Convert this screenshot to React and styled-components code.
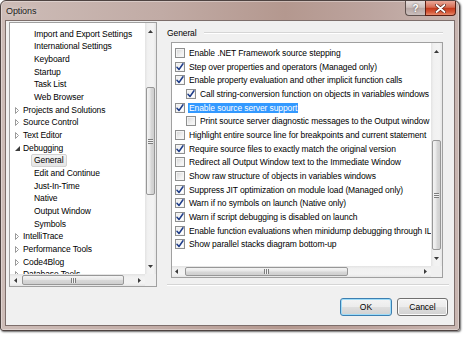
import React from "react";
import styled, { createGlobalStyle } from "styled-components";

const GlobalStyle = createGlobalStyle`
  html, body {
    margin: 0;
    padding: 0;
    background: #ffffff;
  }
  body {
    font-family: "Segoe UI", "Liberation Sans", Arial, sans-serif;
    font-size: 8.5px;
    letter-spacing: -0.1px;
    color: #000;
  }
`;

const Page = styled.div`
  width: 466px;
  height: 337px;
  overflow: hidden;
`;

const Window = styled.div`
  width: 460px;
  height: 331px;
  box-sizing: border-box;
  border: 1px solid #4e4341;
  border-radius: 6px 6px 3px 3px;
  background: linear-gradient(
    90deg,
    #cdbcb7 0%,
    #c1aba5 35%,
    #b4988f 62%,
    #bca39d 80%,
    #c9b6b1 100%
  );
  box-shadow: 1px 1px 2px rgba(0, 0, 0, 0.6),
    inset 0 0 0 1px rgba(255, 255, 255, 0.35);
  display: flex;
  flex-direction: column;
`;

const TitleBar = styled.div`
  height: 19px;
  flex: none;
  display: flex;
  justify-content: space-between;
  align-items: flex-start;
  padding: 0 3px 0 5px;
`;

const Title = styled.span`
  font-size: 9px;
  line-height: 20px;
  color: #1b1b1b;
  text-shadow: 0 0 5px rgba(255, 255, 255, 0.7);
`;

const CaptionButtons = styled.div`
  display: flex;
`;

const HelpButton = styled.div`
  width: 20px;
  height: 15px;
  box-sizing: border-box;
  border: 1px solid #5e504d;
  border-top: none;
  border-right: none;
  border-radius: 0 0 0 4px;
  background: linear-gradient(#e4dbd9, #cdc0bd 45%, #b8a8a5 52%, #cbbfbd);
  display: flex;
  align-items: center;
  justify-content: center;
  color: #ffffff;
  font-size: 10px;
  font-weight: bold;
  text-shadow: 0 0 2px #444;
`;

const CloseButton = styled.div`
  width: 31px;
  height: 15px;
  box-sizing: border-box;
  border: 1px solid #5b1f14;
  border-top: none;
  border-radius: 0 0 4px 0;
  background: linear-gradient(#eaa99a, #d66c52 45%, #c4391b 52%, #d55a3b 80%, #e88c6d);
  display: flex;
  align-items: center;
  justify-content: center;
`;

const Client = styled.div`
  flex: 1;
  margin: 0 4px 4px;
  background: #f0f0f0;
  border: 1px solid #7d6e6b;
  display: flex;
  flex-direction: column;
`;

const Main = styled.div`
  display: flex;
  align-items: flex-start;
  padding: 1px 0 0 3px;
`;

const Tree = styled.div`
  width: 148px;
  height: 265px;
  box-sizing: border-box;
  border: 1px solid #a0a0a0;
  background: #ffffff;
  display: grid;
  grid-template-columns: 1fr 11px;
  grid-template-rows: 1fr 12px;
  grid-template-areas: "content vbar" "hbar corner";
`;

const TreeContent = styled.div`
  grid-area: content;
  overflow: hidden;
  padding-top: 5px;
`;

const TreeRow = styled.div`
  height: 12.67px;
  display: flex;
  align-items: center;
  white-space: nowrap;
  padding-left: ${(p) => (p.$level === 0 ? 5 : 21)}px;
`;

const Expander = styled.span`
  width: 5px;
  height: 7px;
  margin-right: 3px;
  display: flex;
  align-items: center;
`;

const TreeLabel = styled.span`
  line-height: 11px;
  padding: 0 2px;
  border: 1px solid ${(p) => (p.$selected ? "#d2d2d2" : "transparent")};
  border-radius: 2px;
  background: ${(p) =>
    p.$selected ? "linear-gradient(#f4f4f4, #e4e4e4)" : "transparent"};
  margin-left: ${(p) => (p.$level === 0 ? -3 : 0)}px;
`;

const Corner = styled.div`
  grid-area: corner;
  background: #f0f0f0;
`;

const Right = styled.div`
  flex: 1;
  margin-left: 6px;
  padding-right: 5px;
  display: flex;
  flex-direction: column;
`;

const GroupHeader = styled.div`
  height: 20px;
  padding: 1px 6px 0 4px;
  box-sizing: border-box;
  display: flex;
  align-items: center;
`;

const GroupLine = styled.div`
  flex: 1;
  height: 1px;
  margin-left: 7px;
  background: #d5d5d5;
  box-shadow: 0 1px 0 #ffffff;
`;

const ListBox = styled.div`
  margin-left: 8px;
  width: 272px;
  height: 236px;
  box-sizing: border-box;
  border: 1px solid #a0a0a0;
  background: #ffffff;
  display: grid;
  grid-template-columns: 1fr 11px;
  grid-template-rows: 1fr 11px;
  grid-template-areas: "content vbar" "hbar corner";
`;

const ListContent = styled.div`
  grid-area: content;
  overflow: hidden;
  padding-top: 3px;
`;

const OptionRow = styled.div`
  height: 13.7px;
  display: flex;
  align-items: center;
  white-space: nowrap;
  padding-left: ${(p) => 3 + p.$indent * 11}px;
`;

const CheckBox = styled.span`
  flex: none;
  width: 10px;
  height: 10px;
  box-sizing: border-box;
  border: 1px solid #8e8f8f;
  margin-right: 3px;
  background: ${(p) =>
    p.$checked
      ? "linear-gradient(135deg, #e6e6e6, #ffffff 70%)"
      : "linear-gradient(135deg, #d4d4d4, #f0f0f0 60%, #fafafa)"};
  box-shadow: inset 0 0 0 1px #f4f4f4;
  display: flex;
  align-items: center;
  justify-content: center;
`;

const OptionLabel = styled.span`
  line-height: 10px;
  padding: 0 1px;
  color: ${(p) => (p.$selected ? "#ffffff" : "#000000")};
  background: ${(p) => (p.$selected ? "#3399ff" : "transparent")};
`;

const Separator = styled.div`
  height: 1px;
  margin: 6px 0 0 4px;
  background: #d5d5d5;
  box-shadow: 0 1px 0 #ffffff;
`;

const Footer = styled.div`
  display: flex;
  justify-content: flex-end;
  gap: 5px;
  padding: 11px 6px 0 0;
`;

const DialogButton = styled.button`
  width: ${(p) => p.$w}px;
  height: 18px;
  padding: 0;
  font: inherit;
  font-size: 8.5px;
  color: #000;
  border: 1px solid ${(p) => (p.$default ? "#3c7fb1" : "#707070")};
  border-radius: 3px;
  background: linear-gradient(#f4f4f4 0%, #ececec 48%, #dedede 52%, #d1d1d1 100%);
  box-shadow: inset 0 0 0 1px ${(p) => (p.$default ? "#9fdcf8" : "#fbfbfb")};
`;

/* scrollbars */

const VBar = styled.div`
  grid-area: vbar;
  display: flex;
  flex-direction: column;
  background: linear-gradient(90deg, #e3e3e3 0%, #f1f1f1 25%, #f3f3f3 75%, #e6e6e6 100%);
`;

const HBar = styled.div`
  grid-area: hbar;
  display: flex;
  background: linear-gradient(#e3e3e3 0%, #f1f1f1 25%, #f3f3f3 75%, #e6e6e6 100%);
`;

const ArrowCell = styled.div`
  flex: none;
  ${(p) => (p.$horizontal ? "width" : "height")}: ${(p) => p.$size}px;
  display: flex;
  align-items: center;
  justify-content: center;
`;

const Fill = styled.div`
  flex: 1;
`;

const VThumb = styled.div`
  flex: none;
  margin: ${(p) => p.$offset}px 1px 0;
  height: ${(p) => p.$size}px;
  box-sizing: border-box;
  border: 1px solid #979797;
  border-radius: 2px;
  background: linear-gradient(90deg, #f4f4f4, #e7e7e7 45%, #d8d8d8 55%, #cfcfcf);
  display: flex;
  align-items: center;
  justify-content: center;
`;

const HThumb = styled.div`
  flex: none;
  margin: 1px 0 1px ${(p) => p.$offset}px;
  width: ${(p) => p.$size}px;
  box-sizing: border-box;
  border: 1px solid #979797;
  border-radius: 2px;
  background: linear-gradient(#f4f4f4, #e7e7e7 45%, #d8d8d8 55%, #cfcfcf);
  display: flex;
  align-items: center;
  justify-content: center;
`;

const VGrip = styled.span`
  width: 5px;
  height: 5px;
  background: repeating-linear-gradient(#7d7d7d 0 1px, #f2f2f2 1px 2px);
`;

const HGrip = styled.span`
  width: 5px;
  height: 5px;
  background: repeating-linear-gradient(90deg, #7d7d7d 0 1px, #f2f2f2 1px 2px);
`;

function Arrow({ dir }) {
  const pts = {
    up: "0,3 2.5,0 5,3",
    down: "0,0 2.5,3 5,0",
    left: "3,0 0,2.5 3,5",
    right: "0,0 3,2.5 0,5",
  }[dir];
  const vertical = dir === "up" || dir === "down";
  return (
    <svg width={vertical ? 5 : 3} height={vertical ? 3 : 5}>
      <polygon points={pts} fill="#3a3a3a" />
    </svg>
  );
}

function VScrollBar({ up, offset, size, down }) {
  return (
    <VBar>
      <ArrowCell $size={up}>
        <Arrow dir="up" />
      </ArrowCell>
      <VThumb $offset={offset} $size={size}>
        <VGrip />
      </VThumb>
      <Fill />
      <ArrowCell $size={down}>
        <Arrow dir="down" />
      </ArrowCell>
    </VBar>
  );
}

function HScrollBar({ left, offset, size, right }) {
  return (
    <HBar>
      <ArrowCell $horizontal $size={left}>
        <Arrow dir="left" />
      </ArrowCell>
      <HThumb $offset={offset} $size={size}>
        <HGrip />
      </HThumb>
      <Fill />
      <ArrowCell $horizontal $size={right}>
        <Arrow dir="right" />
      </ArrowCell>
    </HBar>
  );
}

function ExpandIcon({ open }) {
  return open ? (
    <svg width="5" height="5">
      <polygon points="5,0 5,5 0,5" fill="#3c3c3c" />
    </svg>
  ) : (
    <svg width="4" height="7">
      <polygon
        points="0.5,0.5 3.5,3.5 0.5,6.5"
        fill="none"
        stroke="#9a9a9a"
        strokeWidth="1"
      />
    </svg>
  );
}

function CheckMark() {
  return (
    <svg width="8" height="8" viewBox="0 0 8 8">
      <path
        d="M1 4.2 L3 6.5 L7 0.8"
        fill="none"
        stroke="#1f3d8a"
        strokeWidth="1.5"
        strokeLinecap="round"
        strokeLinejoin="round"
      />
    </svg>
  );
}

const treeItems = [
  { label: "Import and Export Settings", level: 1 },
  { label: "International Settings", level: 1 },
  { label: "Keyboard", level: 1 },
  { label: "Startup", level: 1 },
  { label: "Task List", level: 1 },
  { label: "Web Browser", level: 1 },
  { label: "Projects and Solutions", level: 0 },
  { label: "Source Control", level: 0 },
  { label: "Text Editor", level: 0 },
  { label: "Debugging", level: 0, open: true },
  { label: "General", level: 1, selected: true },
  { label: "Edit and Continue", level: 1 },
  { label: "Just-In-Time", level: 1 },
  { label: "Native", level: 1 },
  { label: "Output Window", level: 1 },
  { label: "Symbols", level: 1 },
  { label: "IntelliTrace", level: 0 },
  { label: "Performance Tools", level: 0 },
  { label: "Code4Blog", level: 0 },
  { label: "Database Tools", level: 0 },
];

const options = [
  { label: "Enable .NET Framework source stepping", checked: false },
  { label: "Step over properties and operators (Managed only)", checked: true },
  { label: "Enable property evaluation and other implicit function calls", checked: true },
  { label: "Call string-conversion function on objects in variables windows", checked: true, indent: 1 },
  { label: "Enable source server support", checked: true, selected: true },
  { label: "Print source server diagnostic messages to the Output window", checked: false, indent: 1 },
  { label: "Highlight entire source line for breakpoints and current statement", checked: false },
  { label: "Require source files to exactly match the original version", checked: true },
  { label: "Redirect all Output Window text to the Immediate Window", checked: false },
  { label: "Show raw structure of objects in variables windows", checked: false },
  { label: "Suppress JIT optimization on module load (Managed only)", checked: true },
  { label: "Warn if no symbols on launch (Native only)", checked: true },
  { label: "Warn if script debugging is disabled on launch", checked: true },
  { label: "Enable function evaluations when minidump debugging through IL interpreter", checked: true },
  { label: "Show parallel stacks diagram bottom-up", checked: true },
];

export default function App() {
  return (
    <Page>
      <GlobalStyle />
      <Window>
        <TitleBar>
          <Title>Options</Title>
          <CaptionButtons>
            <HelpButton>?</HelpButton>
            <CloseButton>
              <svg width="11" height="9" viewBox="0 0 11 9">
                <path
                  d="M1.5 1 L9.5 8 M9.5 1 L1.5 8"
                  stroke="#5a2218"
                  strokeWidth="3.2"
                  strokeLinecap="round"
                />
                <path
                  d="M1.5 1 L9.5 8 M9.5 1 L1.5 8"
                  stroke="#ffffff"
                  strokeWidth="1.8"
                  strokeLinecap="round"
                />
              </svg>
            </CloseButton>
          </CaptionButtons>
        </TitleBar>
        <Client>
          <Main>
            <Tree>
              <TreeContent>
                {treeItems.map((item) => (
                  <TreeRow key={item.label} $level={item.level}>
                    {item.level === 0 && (
                      <Expander>
                        <ExpandIcon open={item.open} />
                      </Expander>
                    )}
                    <TreeLabel $level={item.level} $selected={item.selected}>
                      {item.label}
                    </TreeLabel>
                  </TreeRow>
                ))}
              </TreeContent>
              <VScrollBar up={17} offset={47} size={108} down={15} />
              <HScrollBar left={11} offset={1} size={102} right={12} />
              <Corner />
            </Tree>
            <Right>
              <GroupHeader>
                General
                <GroupLine />
              </GroupHeader>
              <ListBox>
                <ListContent>
                  {options.map((opt) => (
                    <OptionRow key={opt.label} $indent={opt.indent || 0}>
                      <CheckBox $checked={opt.checked}>
                        {opt.checked && <CheckMark />}
                      </CheckBox>
                      <OptionLabel $selected={opt.selected}>{opt.label}</OptionLabel>
                    </OptionRow>
                  ))}
                </ListContent>
                <VScrollBar up={17} offset={80} size={110} down={16} />
                <HScrollBar left={9} offset={4} size={163} right={12} />
                <Corner />
              </ListBox>
              <Separator />
            </Right>
          </Main>
          <Footer>
            <DialogButton $w={52} $default>
              OK
            </DialogButton>
            <DialogButton $w={51}>Cancel</DialogButton>
          </Footer>
        </Client>
      </Window>
    </Page>
  );
}
